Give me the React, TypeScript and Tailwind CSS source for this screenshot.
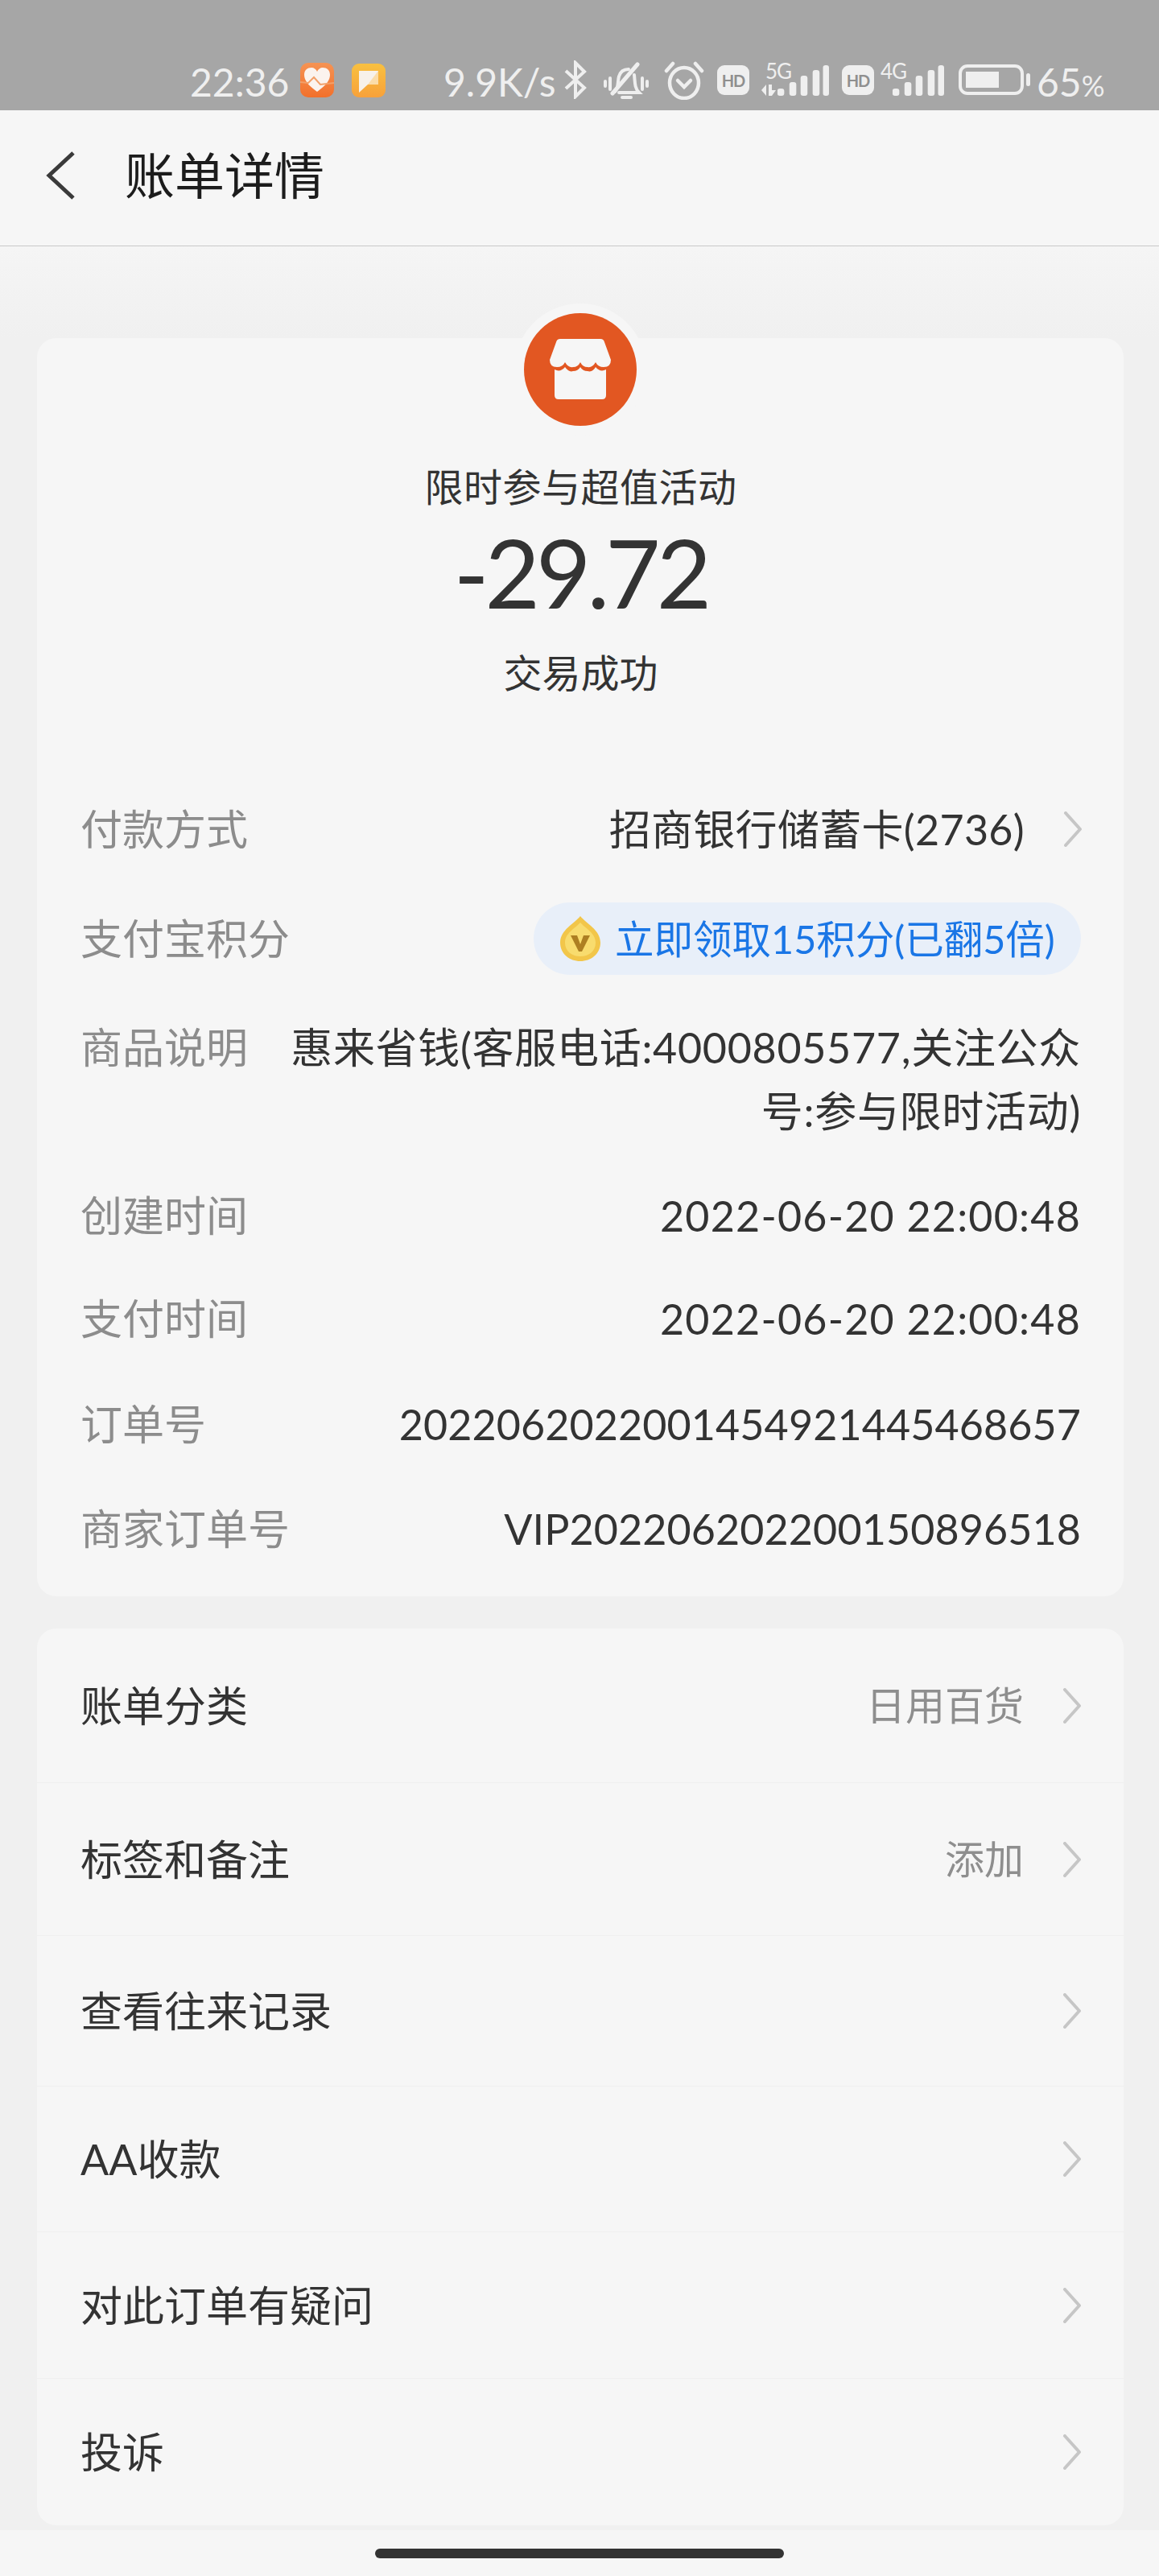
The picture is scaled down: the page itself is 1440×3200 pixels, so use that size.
const Chevron = () => (
  <svg width="24" height="44" viewBox="0 0 24 44" fill="none" className="shrink-0 -mr-[2px]">
    <path d="M3 2 L21 22 L3 42" stroke="#c6c6c6" strokeWidth="4" strokeLinecap="round" strokeLinejoin="round" />
  </svg>
);

const Bars = () => (
  <svg width="60" height="38" viewBox="0 0 60 38" fill="#efefef">
    <rect x="0" y="29" width="8" height="9" rx="3" />
    <rect x="14" y="21" width="8" height="17" rx="3" />
    <rect x="27" y="13" width="8" height="25" rx="3" />
    <rect x="41" y="6" width="8" height="32" rx="3" />
    <rect x="53" y="0" width="7" height="38" rx="3" />
  </svg>
);

const Hd = () => (
  <div className="w-[40px] h-[37px] rounded-[9px] bg-[#efefef] flex items-center justify-center text-[20px] font-bold text-[#8f8f8f] leading-none tracking-[-1px]">
    HD
  </div>
);

function StatusBar() {
  return (
    <div className="h-[137px] bg-[#a6a6a6] flex items-start pt-[75px] pl-[236px] text-[#efefef] text-[48px] leading-none">
      <span className="mt-[3px] w-[125px]">22:36</span>
      {/* 运动健康 */}
      <div className="ml-[12px] mt-[3px] w-[42px] h-[43px] rounded-[10px] bg-gradient-to-b from-[#f59353] to-[#f2702a] flex items-center justify-center">
        <svg width="42" height="43" viewBox="0 0 42 43">
          <path d="M21 36 C10 28 5 22 5 15 C5 9 9 6 14 6 C17 6 20 8 21 11 C22 8 25 6 28 6 C33 6 37 9 37 15 C37 22 32 28 21 36 Z" fill="#fbf3ee" />
          <path d="M0 24 L10 25 L17 18 L25 27 L42 25" fill="none" stroke="#f2a06a" strokeWidth="2" />
        </svg>
      </div>
      {/* 便签 */}
      <div className="ml-[22px] mt-[4px] w-[42px] h-[42px] rounded-[9px] bg-gradient-to-b from-[#f8c040] to-[#f7a13a] flex items-center justify-center">
        <svg width="26" height="30" viewBox="0 0 26 30">
          <path d="M1 3 H25 V20 H12 L1 30 Z" fill="#f7f1ea" />
          <path d="M25 3 V20 H12 Z" fill="#fbdca8" />
        </svg>
      </div>
      <span className="ml-[72px] mt-[3px] w-[140px] whitespace-nowrap">9.9K/s</span>
      {/* 蓝牙 */}
      <svg width="30" height="48" viewBox="0 0 30 48" fill="none" className="ml-[9px]" stroke="#efefef" strokeWidth="4">
        <path d="M3 13 L26 34 L15 45 V3 L26 14 L3 35" />
      </svg>
      {/* 静音 */}
      <svg width="56" height="48" viewBox="0 0 56 48" fill="none" className="ml-[20px] mt-[2px]" stroke="#efefef" strokeWidth="4" strokeLinecap="round">
        <path d="M2 24 V30 M8 20 V34 M48 20 V34 M54 24 V30" />
        <path d="M14 37 C19 32 17 24 19 18 C21 11 26 9 31 9 M38 16 C39 24 38 32 44 38 H19" />
        <path d="M42 3 L11 39" strokeWidth="5" />
        <path d="M23 44 H34" strokeWidth="4" />
      </svg>
      {/* 闹钟 */}
      <svg width="50" height="48" viewBox="0 0 50 48" fill="none" className="ml-[19px] mt-[1px]" stroke="#efefef" strokeWidth="4.5" strokeLinecap="round">
        <ellipse cx="25" cy="27" rx="18" ry="19" />
        <path d="M3 12 L11 3 M47 12 L39 3" />
        <path d="M17 24 L25 32 L33 24" />
      </svg>
      <div className="ml-[16px] mt-[6px]">
        <Hd />
      </div>
      {/* 5G */}
      <div className="ml-[15px] w-[84px] h-[48px] relative">
        <span className="absolute left-[5px] top-[2px] text-[26px] leading-[22px] tracking-[-1px]">5G</span>
        <svg width="18" height="14" viewBox="0 0 18 14" fill="#efefef" className="absolute left-0 bottom-[4px]">
          <path d="M0 7 L6 0 V14 Z M9 0 H13 V7 L18 7 L13 14 H9 Z" />
        </svg>
        <div className="absolute right-0 bottom-[4px] scale-x-[1.07] origin-right">
          <Bars />
        </div>
      </div>
      <div className="ml-[16px] mt-[6px]">
        <Hd />
      </div>
      {/* 4G */}
      <div className="ml-[8px] w-[79px] h-[48px] relative">
        <span className="absolute left-0 top-[2px] text-[26px] leading-[22px] tracking-[-1px]">4G</span>
        <div className="absolute right-0 bottom-[4px] scale-x-[1.07] origin-right">
          <Bars />
        </div>
      </div>
      {/* 电量 */}
      <div className="ml-[18px] mt-[5px] flex items-center">
        <div className="w-[81px] h-[38px] rounded-[11px] border-[4px] border-[#efefef] p-[5px]">
          <div className="w-[41px] h-full bg-[#efefef]" />
        </div>
        <div className="ml-[3px] w-[5px] h-[16px] rounded-full bg-[#efefef]" />
      </div>
      <span className="ml-[8px] mt-[3px] whitespace-nowrap">
        65<span className="text-[36px]">%</span>
      </span>
    </div>
  );
}

const StoreIcon = () => (
  <svg width="76" height="76" viewBox="0 0 76 76" fill="#f6f6f6">
    <path d="M8 4 Q9 0 13 0 H63 Q67 0 68 4 L76 26 Q76 35 67 35 Q60 35 57 29 Q53 36 47 35 Q41 35 38 29 Q35 35 29 35 Q23 36 19 29 Q16 35 9 35 Q0 35 0 26 Z" />
    <path d="M6 38 Q13 42 19 35 Q24 42 29 40 Q35 40 38 35 Q41 40 47 40 Q53 42 57 35 Q63 42 70 38 V70 Q70 75 65 75 H11 Q6 75 6 70 Z" />
  </svg>
);

const Medal = () => (
  <svg width="50" height="56" viewBox="0 0 50 56">
    <path d="M25 0 C32 9 50 17 50 33 C50 47 38 56 25 56 C12 56 0 47 0 33 C0 17 18 9 25 0 Z" fill="#f2c64a" />
    <path d="M25 8 C31 15 44 21 44 33 C44 44 35 50 25 50 C15 50 6 44 6 33 C6 21 19 15 25 8 Z" fill="#f8dc6e" />
    <path d="M13 24 H21 L25 35 L29 24 H37 L27 44 H23 Z" fill="#ad7f22" />
  </svg>
);

function InfoRow({ h, label, children }: { h: string; label: string; children: React.ReactNode }) {
  return (
    <div className={`${h} flex items-center justify-between`}>
      <span className="text-[#8c8c8c] whitespace-nowrap">{label}</span>
      {children}
    </div>
  );
}

function LinkRow({ h, label, value, last }: { h: string; label: string; value?: string; last?: boolean }) {
  return (
    <div className={`${h} flex items-center justify-between px-[54px] ${last ? "" : "border-b border-[#f0f0f0]"}`}>
      <span className="text-[#333333]">{label}</span>
      <div className="flex items-center gap-[48px]">
        {value && <span className="text-[#8e8e8e] text-[49px]">{value}</span>}
        <Chevron />
      </div>
    </div>
  );
}

export default function App() {
  return (
    <div className="w-[1440px] h-[3200px] bg-[#f6f6f6] flex flex-col overflow-hidden [font-family:Lato,'Noto_Sans_CJK_SC',sans-serif] text-[52px] leading-none">
      <StatusBar />

      {/* 标题栏 */}
      <div className="h-[169px] bg-[#f6f6f6] border-b border-[#c9c9c9] flex items-center pb-[6px] pl-[57px]">
        <svg width="36" height="60" viewBox="0 0 36 60" fill="none">
          <path d="M34 2 L4 30 L34 58" stroke="#3a3a3a" strokeWidth="5" />
        </svg>
        <span className="ml-[62px] text-[62px] text-[#1c1c1c]">账单详情</span>
      </div>

      {/* 内容 */}
      <div className="h-[2837px] bg-gradient-to-b from-[#f5f5f5] to-[#f0f0f0] to-[4%] pl-[46px] pr-[44px] pt-[114px]">
        <div className="relative h-[1563px] rounded-[24px] bg-[#f6f6f6] pl-[54px] pr-[53px]">
          <div className="absolute left-1/2 -translate-x-1/2 -top-[43px] w-[164px] h-[164px] rounded-full bg-[#f6f6f6] flex items-center justify-center">
            <div className="w-[140px] h-[140px] rounded-full bg-[#e25722] flex items-center justify-center pb-[1px]">
              <StoreIcon />
            </div>
          </div>

          <div className="pt-[161px] flex flex-col items-center text-[#333333]">
            <span className="h-[48px] text-[48px] leading-[48px] tracking-[0.5px]">限时参与超值活动</span>
            <span className="mt-[23px] h-[118px] text-[118px] leading-[118px] tracking-[-5px] text-[#333333]">-29.72</span>
            <span className="mt-[42px] h-[48px] text-[48px] leading-[48px]">交易成功</span>
          </div>

          <div className="mt-[105px] text-[#333333]">
            <InfoRow h="h-[130px]" label="付款方式">
              <div className="flex items-center gap-[48px]">
                <span className="tracking-[0.3px]">招商银行储蓄卡(2736)</span>
                <Chevron />
              </div>
            </InfoRow>
            <InfoRow h="h-[142px]" label="支付宝积分">
              <div className="h-[90px] w-[680px] rounded-[45px] bg-[#e8eff9] flex items-center pl-[33px]">
                <Medal />
                <span className="ml-[18px] text-[48.5px] text-[#1a76e6] whitespace-nowrap">立即领取15积分(已翻5倍)</span>
              </div>
            </InfoRow>
            {/* 这一行有两行文字，标签对齐第一行 */}
            <div className="h-[210px] flex items-start justify-between pt-[25px] leading-[79px]">
              <span className="text-[#8c8c8c] whitespace-nowrap">商品说明</span>
              <span className="text-right whitespace-nowrap tracking-[0.7px]">
                惠来省钱(客服电话:4000805577,关注公众
                <br />
                号:参与限时活动)
              </span>
            </div>
            <InfoRow h="h-[126px]" label="创建时间">
              <span className="tracking-[1.2px]">2022-06-20 22:00:48</span>
            </InfoRow>
            <InfoRow h="h-[130px]" label="支付时间">
              <span className="tracking-[1.2px]">2022-06-20 22:00:48</span>
            </InfoRow>
            <InfoRow h="h-[132px]" label="订单号">
              <span className="tracking-[0.1px]">2022062022001454921445468657</span>
            </InfoRow>
            <InfoRow h="h-[128px]" label="商家订单号">
              <span className="tracking-[0.1px]">VIP202206202200150896518</span>
            </InfoRow>
          </div>
        </div>

        <div className="mt-[40px] h-[1114px] rounded-[24px] bg-[#f6f6f6]">
          <LinkRow h="h-[192px]" label="账单分类" value="日用百货" />
          <LinkRow h="h-[190px]" label="标签和备注" value="添加" />
          <LinkRow h="h-[187px]" label="查看往来记录" />
          <LinkRow h="h-[181px]" label="AA收款" />
          <LinkRow h="h-[182px]" label="对此订单有疑问" />
          <LinkRow h="h-[182px]" label="投诉" last />
        </div>
      </div>

      {/* 底部横条 */}
      <div className="flex-1 flex justify-center pt-[23px]">
        <div className="w-[508px] h-[12px] rounded-full bg-[#333333]" />
      </div>
    </div>
  );
}
